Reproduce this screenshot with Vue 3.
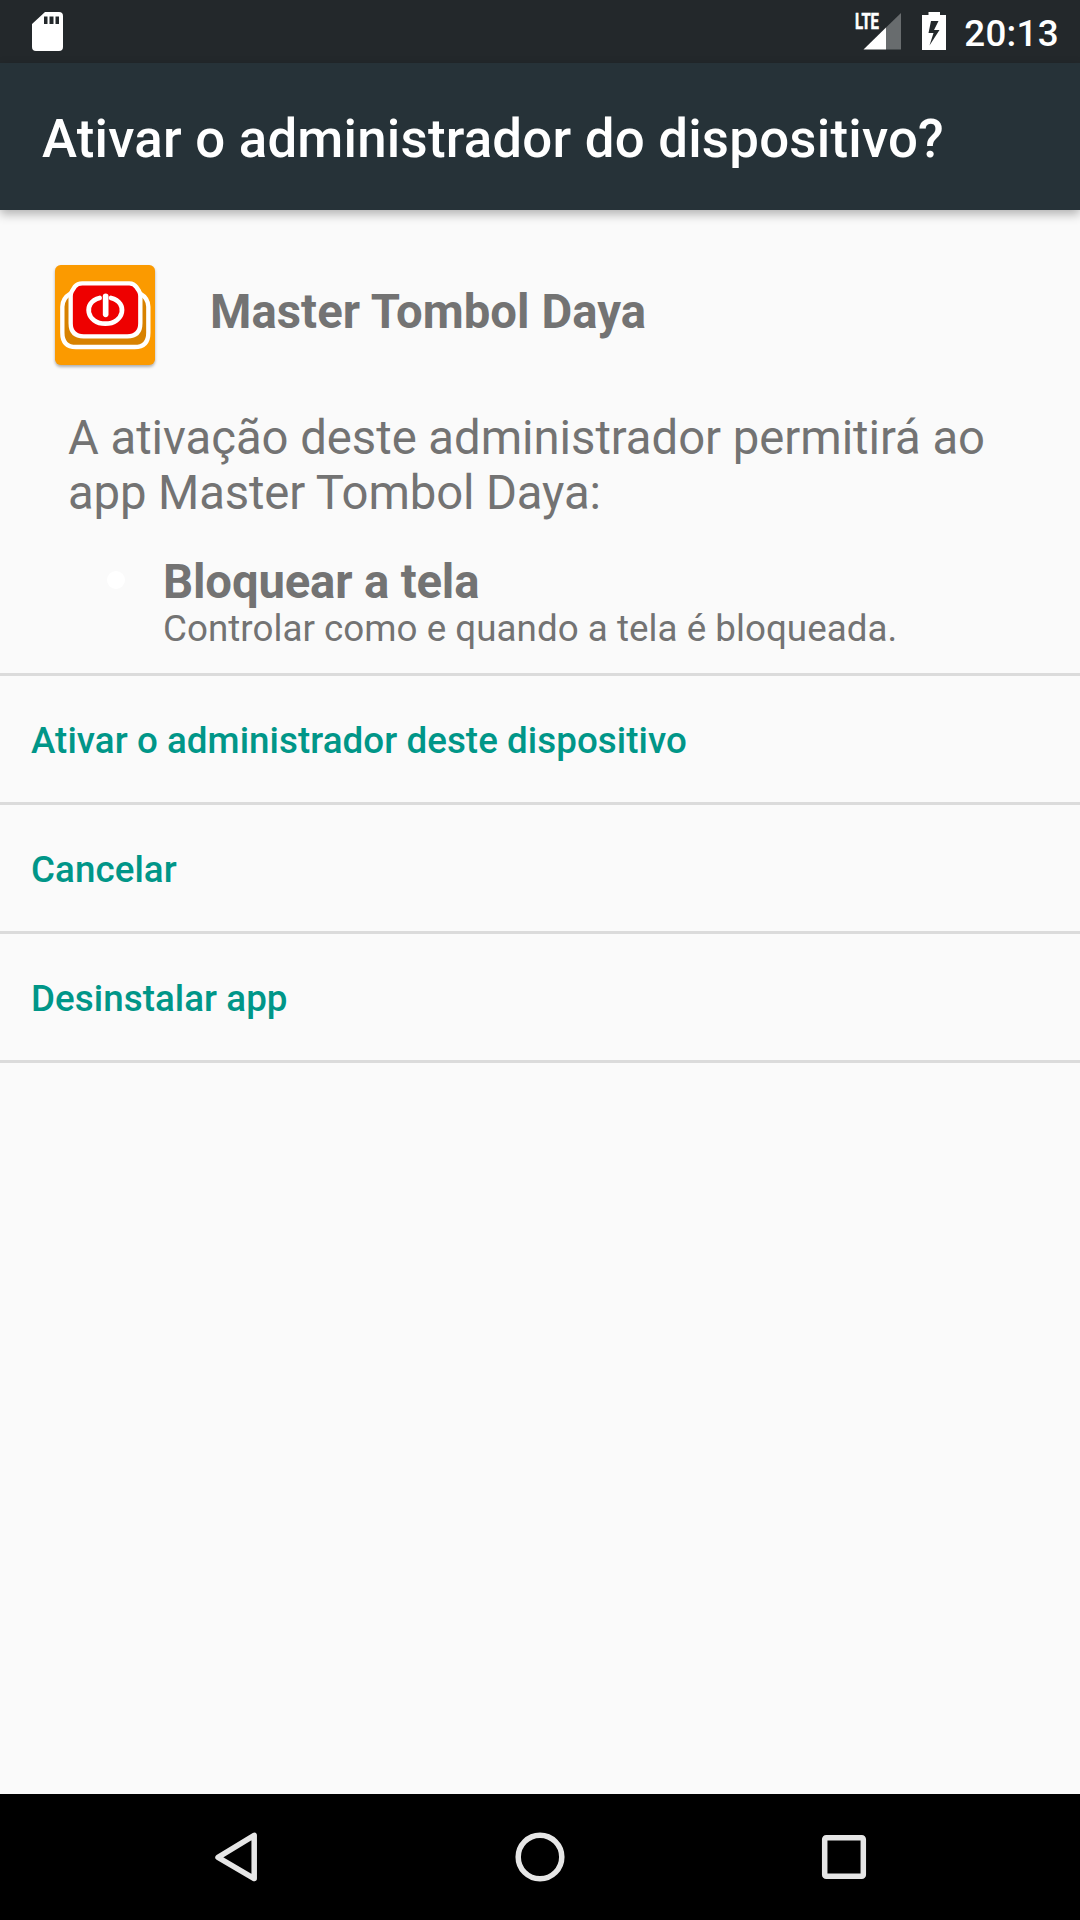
<script setup>
const appName = 'Master Tombol Daya'
const actions = ['Ativar o administrador deste dispositivo', 'Cancelar', 'Desinstalar app']
</script>

<template>
  <div class="screen">
    <header class="status">
      <svg class="sd" width="31" height="39" viewBox="0 0 31 39">
        <path fill="#fff" fill-rule="evenodd" d="M13 0H27Q31 0 31 4V35Q31 39 27 39H4Q0 39 0 35V12ZM12 4.500V12H15.500V4.500ZM17.500 4.500V12H21.500V4.500ZM23.500 4.500V12H27V4.500Z" />
      </svg>
      <div class="status-right">
        <svg class="signal" width="47" height="51" viewBox="0 -12 47 51">
          <path d="M46 1V37.500H31V15.500Z" fill="#686c6e" />
          <path d="M8.500 37.500L31 15.500V37.500Z" fill="#fff" />
          <text x="0" y="17.300" textLength="24" lengthAdjust="spacingAndGlyphs" class="lte">LTE</text>
        </svg>
        <svg class="battery" width="24" height="38" viewBox="0 0 24 38">
          <path fill="#fff" fill-rule="evenodd" d="M6.500 0H18V3H24V38H0V3H6.500ZM9 9L6.500 21H11.500L7.500 33.500L17.500 18H12L16.500 9Z" />
        </svg>
        <span class="clock">20:13</span>
      </div>
    </header>

    <div class="titlebar"><h1>Ativar o administrador do dispositivo?</h1></div>

    <main class="content">
      <section class="app-row">
        <svg class="app-icon" width="100" height="100" viewBox="45 45 300 300">
          <rect x="45" y="45" width="300" height="300" rx="17" fill="#fb9a00" />
          <path d="M92 130Q67 145 67 170V248Q67 291 108 291H284Q325 291 325 248V170Q325 145 300 130Z" fill="#d88200" stroke="#fff" stroke-width="13" />
          <path d="M127 100H268Q282 100 289 111L297 123Q301 130 301 138V220Q301 259 262 259H131Q92 259 92 220V138Q92 130 96 123L105 109Q112 100 127 100Z" fill="#ee0000" stroke="#fff" stroke-width="13" />
          <g fill="none" stroke="#fff" stroke-linecap="round">
            <path d="M179 144C126 157 140 221 196 221C252 221 266 157 213 144" stroke-width="14" />
            <path d="M197 139V193" stroke-width="17" />
          </g>
        </svg>
        <h2>{{ appName }}</h2>
      </section>

      <p class="description">A ativação deste administrador permitirá ao <span>app {{ appName }}:</span></p>

      <section class="policy">
        <span class="bullet"></span>
        <div>
          <h3>Bloquear a tela</h3>
          <p>Controlar como e quando a tela é bloqueada.</p>
        </div>
      </section>

      <div class="actions">
        <button v-for="action in actions" :key="action" type="button">{{ action }}</button>
      </div>
    </main>

    <nav class="navbar">
      <svg width="1080" height="126" viewBox="0 0 1080 126" fill="none" stroke="#e6e6e6" stroke-width="5.5" stroke-linejoin="round">
        <path d="M218 63.300L254.200 41.300V84.600Z" />
        <circle cx="540" cy="63" r="21.800" />
        <rect x="824.700" y="43.700" width="38.600" height="38.600" rx="1.500" />
      </svg>
    </nav>
  </div>
</template>

<style>
body {
  margin: 0;
}
</style>

<style scoped>
.screen {
  width: 1080px;
  height: 1920px;
  display: flex;
  flex-direction: column;
  overflow: hidden;
  background: #fafafa;
  color: #737373;
  font-family: Roboto, "Noto Sans", sans-serif;
}
h1, h2, h3, p {
  margin: 0;
}
.status {
  height: 63px;
  flex: none;
  display: flex;
  justify-content: space-between;
  align-items: flex-start;
  box-sizing: border-box;
  padding: 0 21px 0 32px;
  background: #23282b;
}
svg {
  display: block;
  flex: none;
}
.sd, .battery {
  margin-top: 12px;
}
.status-right {
  display: flex;
}
.lte {
  fill: #fff;
  stroke: #fff;
  stroke-width: 0.6px;
  font-size: 22px;
  font-weight: 700;
}
.battery {
  margin-left: 20px;
}
.clock {
  margin-left: 18px;
  color: #fff;
  font-size: 36.75px;
  font-weight: 500;
  letter-spacing: 0.3px;
  line-height: 67px;
}
.titlebar {
  height: 147px;
  flex: none;
  box-sizing: border-box;
  padding: 5px 42px 0;
  display: flex;
  align-items: center;
  background: #263238;
  box-shadow: 0 4px 10px rgba(0, 0, 0, 0.3);
}
h1 {
  color: #fff;
  font-size: 52.8px;
  font-weight: 500;
  letter-spacing: 0.22px;
  line-height: 62px;
  white-space: nowrap;
}
.content {
  flex: 1;
  padding-top: 55px;
}
.app-row {
  display: flex;
  align-items: flex-start;
  gap: 55px;
  height: 100px;
  padding-left: 55px;
}
.app-icon {
  filter: drop-shadow(0 2px 1.5px rgba(0, 0, 0, 0.3));
}
h2 {
  margin-top: 20px;
  font-size: 47.25px;
  font-weight: 700;
  letter-spacing: 0.06px;
  line-height: 55px;
}
.description {
  margin: 46px 68px 0;
  font-size: 47.25px;
  letter-spacing: -0.03px;
  line-height: 55px;
}
.description span {
  letter-spacing: -0.12px;
}
.policy {
  display: flex;
  margin-top: 36px;
  padding: 0 0 23px 107px;
}
.bullet {
  width: 18px;
  height: 18px;
  margin: 14px 38px 0 0;
  border-radius: 50%;
  background: #fff;
}
h3 {
  font-size: 47.25px;
  font-weight: 700;
  letter-spacing: -0.15px;
  line-height: 50px;
}
.policy p {
  font-size: 36.75px;
  letter-spacing: 0.03px;
  line-height: 43px;
}
.actions {
  border-top: 3px solid #dbdbdb;
}
button {
  display: block;
  width: 100%;
  height: 129px;
  box-sizing: border-box;
  margin: 0;
  padding: 3px 31px 0;
  border: 0;
  border-bottom: 3px solid #dbdbdb;
  background: none;
  color: #009688;
  font: 500 36.75px Roboto, "Noto Sans", sans-serif;
  letter-spacing: 0.05px;
  text-align: left;
}
.navbar {
  height: 126px;
  flex: none;
  background: #000;
}
</style>
